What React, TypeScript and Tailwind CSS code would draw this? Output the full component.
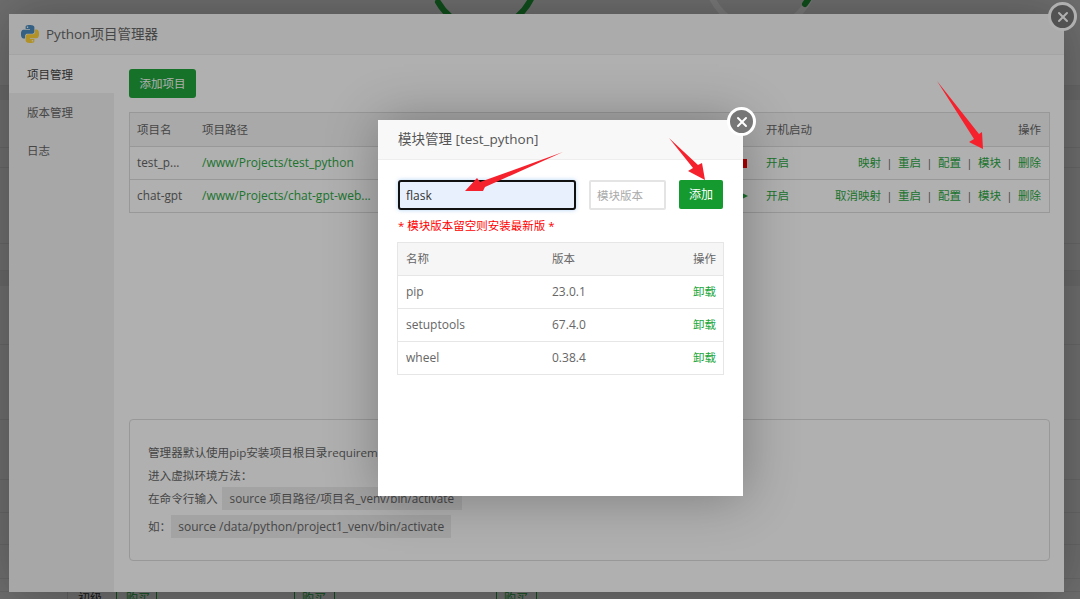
import { X } from "lucide-react";
import { clsx } from "clsx";

const projects = [
  { name: "test_p...", path: "/www/Projects/test_python", running: false, map: "映射" },
  { name: "chat-gpt", path: "/www/Projects/chat-gpt-web...", running: true, map: "取消映射" },
];

const modules = [
  { name: "pip", version: "23.0.1" },
  { name: "setuptools", version: "67.4.0" },
  { name: "wheel", version: "0.38.4" },
];

// rows of the page behind the dialogs, only their ends show at the edges
const pageRows = [72, 14, 48, 20, 76, 27, 15, 59, 75, 60, 33, 32, 34, 13];

function CloseButton({ className }: { className: string }) {
  return (
    <button className={clsx("absolute right-[-13px] flex h-[29px] w-[29px] items-center justify-center rounded-full border-[3px] border-white bg-[#777]", className)}>
      <X className="h-4 w-4 text-white" strokeWidth={3} />
    </button>
  );
}

function PythonLogo() {
  return (
    <svg viewBox="0 0 24 24" className="h-[18px] w-[18px]">
      <path
        fill="#4b8bbe"
        d="M14.25.18l.9.2.73.26.59.3.45.32.34.34.25.34.16.33.1.3.04.26.02.2-.01.13V8.5l-.05.63-.13.55-.21.46-.26.38-.3.31-.33.25-.35.19-.35.14-.33.1-.3.07-.26.04-.21.02H8.77l-.69.05-.59.14-.5.22-.41.27-.33.32-.27.35-.2.36-.15.37-.1.35-.07.32-.04.27-.02.21v3.06H3.17l-.21-.03-.28-.07-.32-.12-.35-.18-.36-.26-.36-.36-.35-.46-.32-.59-.28-.73-.21-.88-.14-1.05-.05-1.23.06-1.22.16-1.04.24-.87.32-.71.36-.57.4-.44.42-.33.42-.24.4-.16.36-.1.32-.05.24-.01h.16l.06.01h8.16v-.83H6.18l-.01-2.75-.02-.37.05-.34.11-.31.17-.28.25-.26.31-.23.38-.2.44-.18.51-.15.58-.12.64-.1.71-.06.77-.04.84-.02 1.27.05zm-6.3 1.98l-.23.33-.08.41.08.41.23.34.33.22.41.09.41-.09.33-.22.23-.34.08-.41-.08-.41-.23-.33-.33-.22-.41-.09-.41.09z"
      />
      <path
        fill="#ffd43b"
        d="M21.04 6.11l.28.06.32.12.35.18.36.27.36.35.35.47.32.59.28.73.21.88.14 1.04.05 1.23-.06 1.23-.16 1.04-.24.86-.32.71-.36.57-.4.45-.42.33-.42.24-.4.16-.36.09-.32.05-.24.02-.16-.01h-8.22v.82h5.84l.01 2.76.02.36-.05.34-.11.31-.17.29-.25.25-.31.24-.38.2-.44.17-.51.15-.58.13-.64.09-.71.07-.77.04-.84.01-1.27-.04-1.07-.14-.9-.2-.73-.25-.59-.3-.45-.33-.34-.34-.25-.34-.16-.33-.1-.3-.04-.25-.02-.2.01-.13v-5.34l.05-.64.13-.54.21-.46.26-.38.3-.32.33-.24.35-.2.35-.14.33-.1.3-.06.26-.04.21-.02.13-.01h5.84l.69-.05.59-.14.5-.21.41-.28.33-.32.27-.35.2-.36.15-.36.1-.35.07-.32.04-.28.02-.21V6.07h2.09l.14.01zm-6.47 14.25l-.23.33-.08.41.08.41.23.33.33.23.41.08.41-.08.33-.23.23-.33.08-.41-.08-.41-.23-.33-.33-.23-.41-.08-.41.08z"
      />
    </svg>
  );
}

function Sep() {
  return <span className="w-[17px] text-center text-[#666]">|</span>;
}

function BackgroundPage() {
  return (
    <div className="flex h-[599px] flex-col bg-[#e8e8e8]">
      {/* gauges, cut off by the dialog */}
      <svg viewBox="0 0 1080 14" className="h-[14px] w-[1080px] shrink-0">
        <path d="M438 2 A54 54 0 0 0 486 29 A54 54 0 0 0 532 -3" fill="none" stroke="#20a53a" strokeWidth="6" strokeLinecap="round" />
        <circle cx="761" cy="-25" r="54" fill="none" stroke="#ffffff" strokeWidth="6" />
        <path d="M805 4 A54 54 0 0 0 812 -8" fill="none" stroke="#20a53a" strokeWidth="6" strokeLinecap="round" />
      </svg>
      <div className="flex flex-1 flex-col">
        {pageRows.map((h, i) => (
          <div
            key={i}
            style={{ height: h }}
            className={i === 1 || i === 6 ? "shrink-0 bg-[#dcdcdc]" : "shrink-0 border-b border-[#d8d8d8]"}
          />
        ))}
      </div>
      <div className="flex h-[7px] shrink-0 items-start overflow-hidden text-xs leading-[14px] text-[#333]">
        <span className="ml-[67px] w-[49px] border-l border-[#ccc] pl-[10px]">初级</span>
        <span className="w-[41px] border-x border-[#20a53a] pl-[9px] text-[#20a53a]">购买</span>
        <span className="ml-[137px] w-[41px] border-x border-[#20a53a] pl-[7px] text-[#20a53a]">购买</span>
        <span className="ml-[161px] w-[41px] border-x border-[#20a53a] pl-[7px] text-[#20a53a]">购买</span>
      </div>
    </div>
  );
}

function ProjectTable() {
  return (
    <div className="mt-[14px] border border-[#ddd] text-[11.5px] text-[#666]">
      <div className="grid h-[33px] grid-cols-[65px_571px_1fr_auto] items-center bg-[#f5f5f5] pr-2">
        <span className="pl-[7px]">项目名</span>
        <span className="pl-[7px]">项目路径</span>
        <span>开机启动</span>
        <span>操作</span>
      </div>
      {projects.map((p) => (
        <div key={p.name} className="grid h-[33px] grid-cols-[65px_571px_1fr_auto] items-center border-t border-[#ddd] pr-2">
          <span className="pl-[7px] text-[11.8px]">{p.name}</span>
          <span className="flex items-center justify-between pl-[7px] pr-[18px]">
            <span className="text-xs text-[#2aa842]">{p.path}</span>
            {p.running ? (
              <svg viewBox="0 0 8 8" className="h-2 w-2 text-[#20a53a]">
                <path d="M0 0 L8 4 L0 8 Z" fill="currentColor" />
              </svg>
            ) : (
              <span className="mr-[1.5px] h-[9px] w-[8px] bg-[#ff0000]" />
            )}
          </span>
          <span className="text-[#2aa842]">开启</span>
          <span className="flex items-center text-[#2aa842]">
            <span>{p.map}</span>
            <Sep />
            <span>重启</span>
            <Sep />
            <span>配置</span>
            <Sep />
            <span>模块</span>
            <Sep />
            <span>删除</span>
          </span>
        </div>
      ))}
    </div>
  );
}

function ProjectManager() {
  return (
    <div className="absolute left-[9px] top-[14px] flex h-[578px] w-[1055px] flex-col bg-white shadow-[1px_1px_50px_rgba(0,0,0,0.3)]">
      <div className="flex h-[41px] shrink-0 items-center gap-[7px] border-b border-[#eee] bg-[#f8f8f8] pl-3 text-[13.5px] text-[#666]">
        <PythonLogo />
        <span>Python项目管理器</span>
      </div>
      <div className="flex min-h-0 flex-1">
        <div className="w-[105px] shrink-0 bg-[#f2f2f2] text-[11.5px] text-[#666]">
          <div className="flex h-[38px] items-center bg-white pl-[18px] pt-[2px] text-[#444]">项目管理</div>
          <div className="flex h-[38px] items-center pl-[18px] pt-[2px]">版本管理</div>
          <div className="flex h-[38px] items-center pl-[18px] pt-[2px]">日志</div>
        </div>
        <div className="flex min-w-0 flex-1 flex-col pb-[31px] pl-[15px] pr-[14px] pt-[14px]">
          <button className="flex h-[29px] w-[67px] items-center justify-center rounded-[3px] bg-[#20a53a] text-[11.5px] text-white">
            添加项目
          </button>
          <ProjectTable />
          <div className="mt-auto flex h-[142px] flex-col rounded-[4px] border border-[#ddd] pl-[18px] pt-[21px] text-[11.6px] text-[#666]">
            <p className="leading-[23px]">管理器默认使用pip安装项目根目录requirements.txt下的依赖</p>
            <p className="leading-[23px]">进入虚拟环境方法：</p>
            <p className="flex h-[23px] items-center">
              在命令行输入
              <code className="ml-1 flex h-[23px] items-center bg-[#ececec] px-2 font-[inherit] text-[11.7px]">source 项目路径/项目名_venv/bin/activate</code>
            </p>
            <p className="mt-[5px] flex h-[23px] items-center">
              如：
              <code className="flex h-[23px] items-center bg-[#ececec] px-[7px] font-[inherit] text-xs">source /data/python/project1_venv/bin/activate</code>
            </p>
          </div>
        </div>
      </div>
      <CloseButton className="top-[-12px]" />
    </div>
  );
}

function ModuleManager() {
  return (
    <div className="absolute left-[378px] top-[120px] flex h-[376px] w-[365px] flex-col bg-white shadow-[1px_1px_50px_rgba(0,0,0,0.3)]">
      <div className="flex h-10 shrink-0 items-center border-b border-[#eee] bg-[#f8f8f8] pl-5 text-[13.5px] text-[#555]">
        模块管理 [test_python]
      </div>
      <div className="px-5 pt-5">
        <div className="flex items-start">
          <input
            readOnly
            value="flask"
            className="h-[30px] w-[178px] rounded-[3px] border-2 border-[#111] bg-[#e8f0fe] px-[6px] text-xs text-[#333] shadow-[0_0_4px_rgba(32,120,220,0.35)] outline-none"
          />
          <input
            readOnly
            placeholder="模块版本"
            className="ml-[13px] h-[30px] w-[77px] rounded-[2px] border-2 border-[#e4e4e4] px-[6px] text-[11.5px] outline-none placeholder:text-[#aaa]"
          />
          <button className="ml-[13px] h-[29px] w-[44px] rounded-[2px] bg-[#149a2e] text-xs text-white">添加</button>
        </div>
        <p className="mt-2 text-[11.5px] leading-[16px] text-[#ff0000]">* 模块版本留空则安装最新版 *</p>
        <div className="ml-[-1px] mt-2 w-[327px] border border-[#e6e6e6] text-xs text-[#666]">
          <div className="grid h-[32px] grid-cols-[146px_1fr_auto] items-center bg-[#f6f6f6] pl-2 pr-[7px] text-[11.5px]">
            <span>名称</span>
            <span>版本</span>
            <span>操作</span>
          </div>
          {modules.map((m) => (
            <div key={m.name} className="grid h-[33px] grid-cols-[146px_1fr_auto] items-center border-t border-[#e6e6e6] pl-2 pr-[7px]">
              <span>{m.name}</span>
              <span>{m.version}</span>
              <span className="text-[11.5px] text-[#20a53a]">卸载</span>
            </div>
          ))}
        </div>
      </div>
      <CloseButton className="top-[-13px]" />
    </div>
  );
}

function Arrows() {
  return (
    <svg viewBox="0 0 1080 599" className="pointer-events-none absolute inset-0 h-[599px] w-[1080px]">
      <polygon fill="#f5222d" points="563,152 480,182 477,178 465,191 483,191 485,187" />
      <polygon fill="#f5222d" points="669,138 693,168 688,171 705,180 702,163 698,165" />
      <polygon fill="#f5222d" points="937,81 974,139 969,142 983,149 982,132 979,134" />
    </svg>
  );
}

export default function App() {
  return (
    <div className="relative h-[599px] w-[1080px] overflow-hidden font-['Open_Sans','Noto_Sans_CJK_SC',sans-serif]">
      <BackgroundPage />
      <div className="absolute inset-0 bg-black/[0.31]" />
      <ProjectManager />
      <div className="absolute inset-0 bg-black/[0.31]" />
      <ModuleManager />
      <Arrows />
    </div>
  );
}
